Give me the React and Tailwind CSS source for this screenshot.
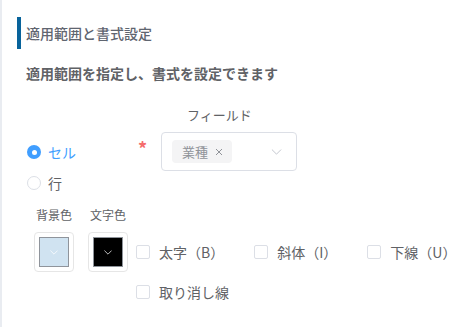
import React from "react";

function Chevron({ className }) {
  return (
    <svg className={className} viewBox="0 0 12 7" fill="none" stroke="currentColor" strokeWidth="1.1" strokeLinecap="round" strokeLinejoin="round">
      <path d="M1 1l5 5 5-5" />
    </svg>
  );
}

function Checkbox({ label, mr = true }) {
  return (
    <label className={`flex items-center h-[40px] ${mr ? "mr-[30px]" : ""}`}>
      <span className="w-[14px] h-[14px] rounded-[2px] border border-[#dcdfe6] bg-white shrink-0" />
      <span className="pl-[9px] text-[14px] leading-[20px] text-[#606266] whitespace-nowrap">{label}</span>
    </label>
  );
}

function ColorPicker({ label, color, inner }) {
  return (
    <div className="flex flex-col items-center w-[40px]">
      <div className="h-[20px] leading-[20px] text-[12px] text-[#606266] whitespace-nowrap">{label}</div>
      <div className="mt-[7px] w-[40px] h-[40px] rounded-[4px] border border-[#e6e6e6] flex items-center justify-center">
        <div className={`w-[30px] h-[30px] border ${inner} flex items-center justify-center`} style={{ backgroundColor: color }}>
          <Chevron className="w-[8px] h-[5px] text-white" />
        </div>
      </div>
    </div>
  );
}

export default function App() {
  return (
    <div
      className="w-[471px] h-[327px] bg-white border-l-2 border-[#e9ecf1] overflow-hidden"
      style={{ fontFamily: '"Noto Sans CJK JP", "Noto Sans", sans-serif' }}
    >
      <div className="mt-[17px] ml-[15px] h-[32px] flex items-center border-l-4 border-[#08639b] pl-[5px] text-[14px] font-medium text-[#5f6570]">
        適用範囲と書式設定
      </div>
      <div className="mt-[14px] ml-[24px] h-[20px] leading-[20px] text-[14px] font-bold text-[#606266]">
        適用範囲を指定し、書式を設定できます
      </div>

      <div className="flex mt-[22px] ml-[25px]">
        <div className="w-[110px] pt-[37px] flex flex-col gap-[11px]">
          <div className="flex items-center h-[20px]">
            <span className="w-[14px] h-[14px] rounded-full bg-[#409eff] flex items-center justify-center">
              <span className="w-[5px] h-[5px] rounded-full bg-white" />
            </span>
            <span className="pl-[7px] text-[14px] text-[#409eff]">セル</span>
          </div>
          <div className="flex items-center h-[20px]">
            <span className="w-[14px] h-[14px] rounded-full border border-[#dcdfe6] bg-white" />
            <span className="pl-[7px] text-[14px] text-[#606266]">行</span>
          </div>
        </div>
        <div className="flex flex-col">
          <div className="h-[20px] leading-[20px] pl-[50px] text-[13px] text-[#606266]">フィールド</div>
          <div className="flex mt-[7px]">
            <span className="w-[24px] pt-[5px] pl-[1px] text-[18px] leading-[22px] font-bold text-[#f56c6c]">*</span>
            <div className="w-[136px] h-[39px] rounded-[4px] border border-[#dcdfe6] flex items-center pl-[10px] pr-[14px]">
              <span className="h-[23px] rounded-[4px] bg-[#f4f4f5] flex items-center pl-[10px] pr-[9px] text-[13px] text-[#909399]">
                業種
                <svg className="ml-[7px] w-[8px] h-[8px]" viewBox="0 0 8 8" stroke="currentColor" strokeWidth="1">
                  <path d="M1 1l6 6M7 1l-6 6" />
                </svg>
              </span>
              <Chevron className="ml-auto w-[11px] h-[6px] text-[#c0c4cc]" />
            </div>
          </div>
        </div>
      </div>

      <div className="flex mt-[12px] ml-[32px]">
        <div className="flex gap-[14px]">
          <ColorPicker label="背景色" color="#d0e3f1" inner="border-[#8f949b]" />
          <ColorPicker label="文字色" color="#000000" inner="border-[#8f949b]" />
        </div>
        <div className="ml-[8px] mt-[27px] flex flex-wrap w-[335px]">
          <Checkbox label="太字（B）" />
          <Checkbox label="斜体（I）" />
          <Checkbox label="下線（U）" mr={false} />
          <Checkbox label="取り消し線" />
        </div>
      </div>
    </div>
  );
}
